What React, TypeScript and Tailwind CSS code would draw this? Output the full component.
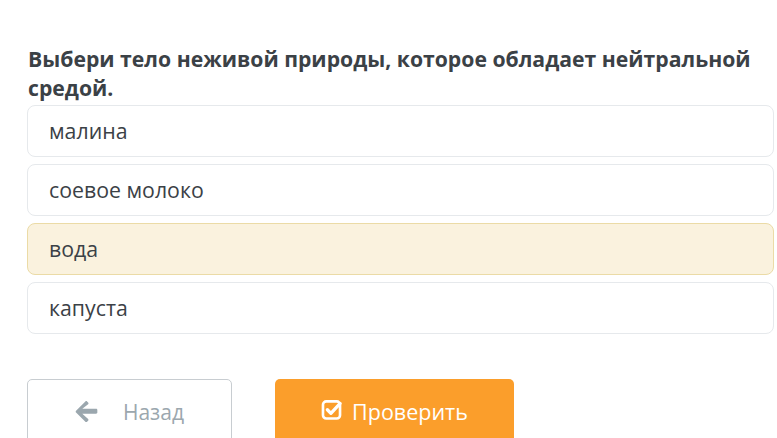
import React from 'react';

const options = ['малина', 'соевое молоко', 'вода', 'капуста'];
const selected = 2;

const ArrowLeft = () => (
  <svg width="23" height="21" viewBox="0 0 448 430" fill="currentColor">
    <path d="M257 417l-22 22c-10 10-25 10-34 0L10 249c-10-10-10-25 0-34L201 24c10-10 25-10 34 0l22 22c10 10 10 26 0 35L138 174h283c14 0 25 11 25 25v52c0 14-11 25-25 25H138l119 106c10 10 10 26 0 35z" transform="translate(0,-14)" />
  </svg>
);

const CheckSquare = () => (
  <svg width="22" height="22" viewBox="0 0 20 20" fill="none" stroke="currentColor">
    <rect x="1.8" y="2.2" width="15.5" height="15.5" rx="3" strokeWidth="2.4" />
    <path d="M5.8 9.8l3.2 3.2 8.4-9" strokeWidth="3" strokeLinecap="round" strokeLinejoin="round" />
  </svg>
);

export default function App() {
  return (
    <div className="w-[777px] h-[438px] overflow-hidden bg-white" style={{ fontFamily: '"Open Sans", sans-serif' }}>
      <div className="pl-[27px] pr-[3px] pt-[44px]">
        <h2 className="pl-px text-[21.2px] leading-[29px] font-bold text-[#3b4146]">
          Выбери тело неживой природы, которое обладает нейтральной средой.
        </h2>
        <div className="mt-[3px] flex flex-col gap-[7px]">
          {options.map((o, i) => (
            <div
              key={o}
              className={`h-[52px] flex items-center px-[21px] rounded-[8px] border text-[21.3px] text-[#3b4146] ${
                i === selected ? 'bg-[#faf2de] border-[#ebdba6]' : 'bg-white border-[#e6e9ec]'
              }`}
            >
              {o}
            </div>
          ))}
        </div>
        <div className="mt-[45px] flex gap-[43px]">
          <button className="w-[205px] h-[70px] rounded-t-[5px] border border-[#c8cdd1] bg-white flex items-start pt-[17px] justify-center gap-[25px] text-[21px] text-[#9ba7ae]">
            <span className="mt-[4px]"><ArrowLeft /></span>
            <span>Назад</span>
          </button>
          <button className="w-[239px] h-[70px] rounded-t-[5px] bg-[#fb9e2b] flex items-start pt-[17px] justify-center gap-[9px] text-[21.5px] text-white">
            <span className="mt-[3px]"><CheckSquare /></span>
            <span>Проверить</span>
          </button>
        </div>
      </div>
    </div>
  );
}
